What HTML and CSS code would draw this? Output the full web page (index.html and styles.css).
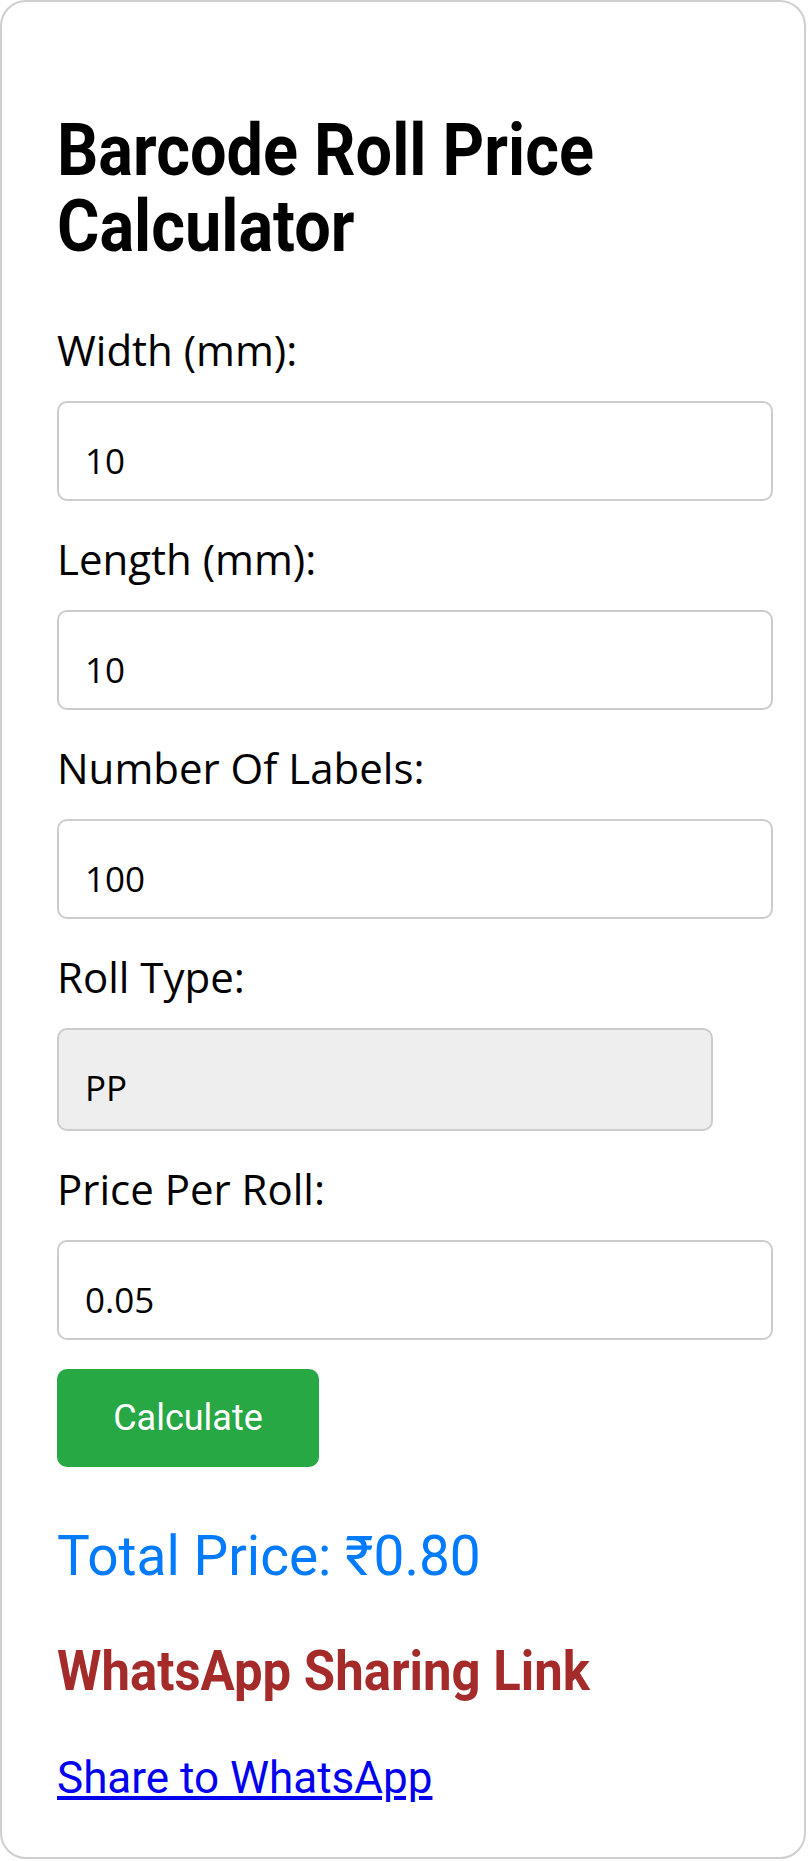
FILE: index.html
```html
<!DOCTYPE html>
<html lang="en">
<head>
<meta charset="utf-8">
<title>Barcode Roll Price Calculator</title>
<link rel="stylesheet" href="styles.css">
</head>
<body>
<div class="card">
  <h1 class="title">Barcode Roll Price Calculator</h1>

  <label class="label">Width (mm):</label>
  <div class="field"><span class="field-text">10</span></div>

  <label class="label">Length (mm):</label>
  <div class="field"><span class="field-text">10</span></div>

  <label class="label">Number Of Labels:</label>
  <div class="field"><span class="field-text">100</span></div>

  <label class="label">Roll Type:</label>
  <div class="select"><span class="select-text">PP</span></div>

  <label class="label">Price Per Roll:</label>
  <div class="field"><span class="field-text">0.05</span></div>

  <button class="btn" type="button">Calculate</button>

  <p class="total">Total Price: ₹0.80</p>

  <h3 class="share-title">WhatsApp Sharing Link</h3>

  <a class="share-link" href="#">Share to WhatsApp</a>
</div>
</body>
</html>
```

FILE: styles.css
```css
html, body {
  margin: 0;
  padding: 0;
  background: #ffffff;
}

.card {
  width: 806px;
  box-sizing: border-box;
  border: 2px solid #cfcfcf;
  border-radius: 26px;
  padding: 111px 0 53px 55px;
  background: #ffffff;
}

.title {
  margin: 0 0 56px 0;
  font-family: Roboto, "Liberation Sans", sans-serif;
  font-weight: 700;
  font-size: 72px;
  line-height: 76px;
  color: #000000;
  transform: scaleX(0.9);
  transform-origin: left top;
}

.label {
  display: block;
  font-family: "Open Sans", "Noto Sans", sans-serif;
  font-size: 42px;
  line-height: 57px;
  color: #000000;
  margin-bottom: 23px;
}

.field {
  width: 716px;
  height: 100px;
  box-sizing: border-box;
  border: 2px solid #cccccc;
  border-radius: 10px;
  padding: 40px 26px 0 26px;
  margin-bottom: 29px;
  background: #ffffff;
}

.field-text {
  display: block;
  font-family: "Open Sans", "Noto Sans", sans-serif;
  font-size: 35px;
  line-height: 35px;
  color: #000000;
}

.select {
  width: 656px;
  height: 103px;
  box-sizing: border-box;
  border: 2px solid #cccccc;
  border-radius: 10px;
  padding: 40px 26px 0 26px;
  margin-bottom: 29px;
  background: #eeeeee;
}

.select-text {
  display: block;
  font-family: "Open Sans", "Noto Sans", sans-serif;
  font-size: 35px;
  line-height: 35px;
  color: #000000;
}

.btn {
  display: block;
  width: 262px;
  height: 98px;
  margin: 0;
  padding: 0;
  border: none;
  border-radius: 10px;
  background: #28a745;
  color: #ffffff;
  font-family: Roboto, "Liberation Sans", sans-serif;
  font-size: 36px;
}

.total {
  margin: 56px 0 0 0;
  font-family: Roboto, "Liberation Sans", sans-serif;
  font-size: 55px;
  line-height: 66px;
  color: #007bff;
}

.share-title {
  margin: 50px 0 0 0;
  font-family: Roboto, "Liberation Sans", sans-serif;
  font-weight: 700;
  font-size: 55px;
  line-height: 64px;
  color: #a52a2a;
  transform: scaleX(0.925);
  transform-origin: left top;
}

.share-link {
  display: inline-block;
  margin-top: 49px;
  font-family: Roboto, "Liberation Sans", sans-serif;
  font-size: 44px;
  line-height: 52px;
  color: #0000ee;
  text-decoration: underline;
}
```
